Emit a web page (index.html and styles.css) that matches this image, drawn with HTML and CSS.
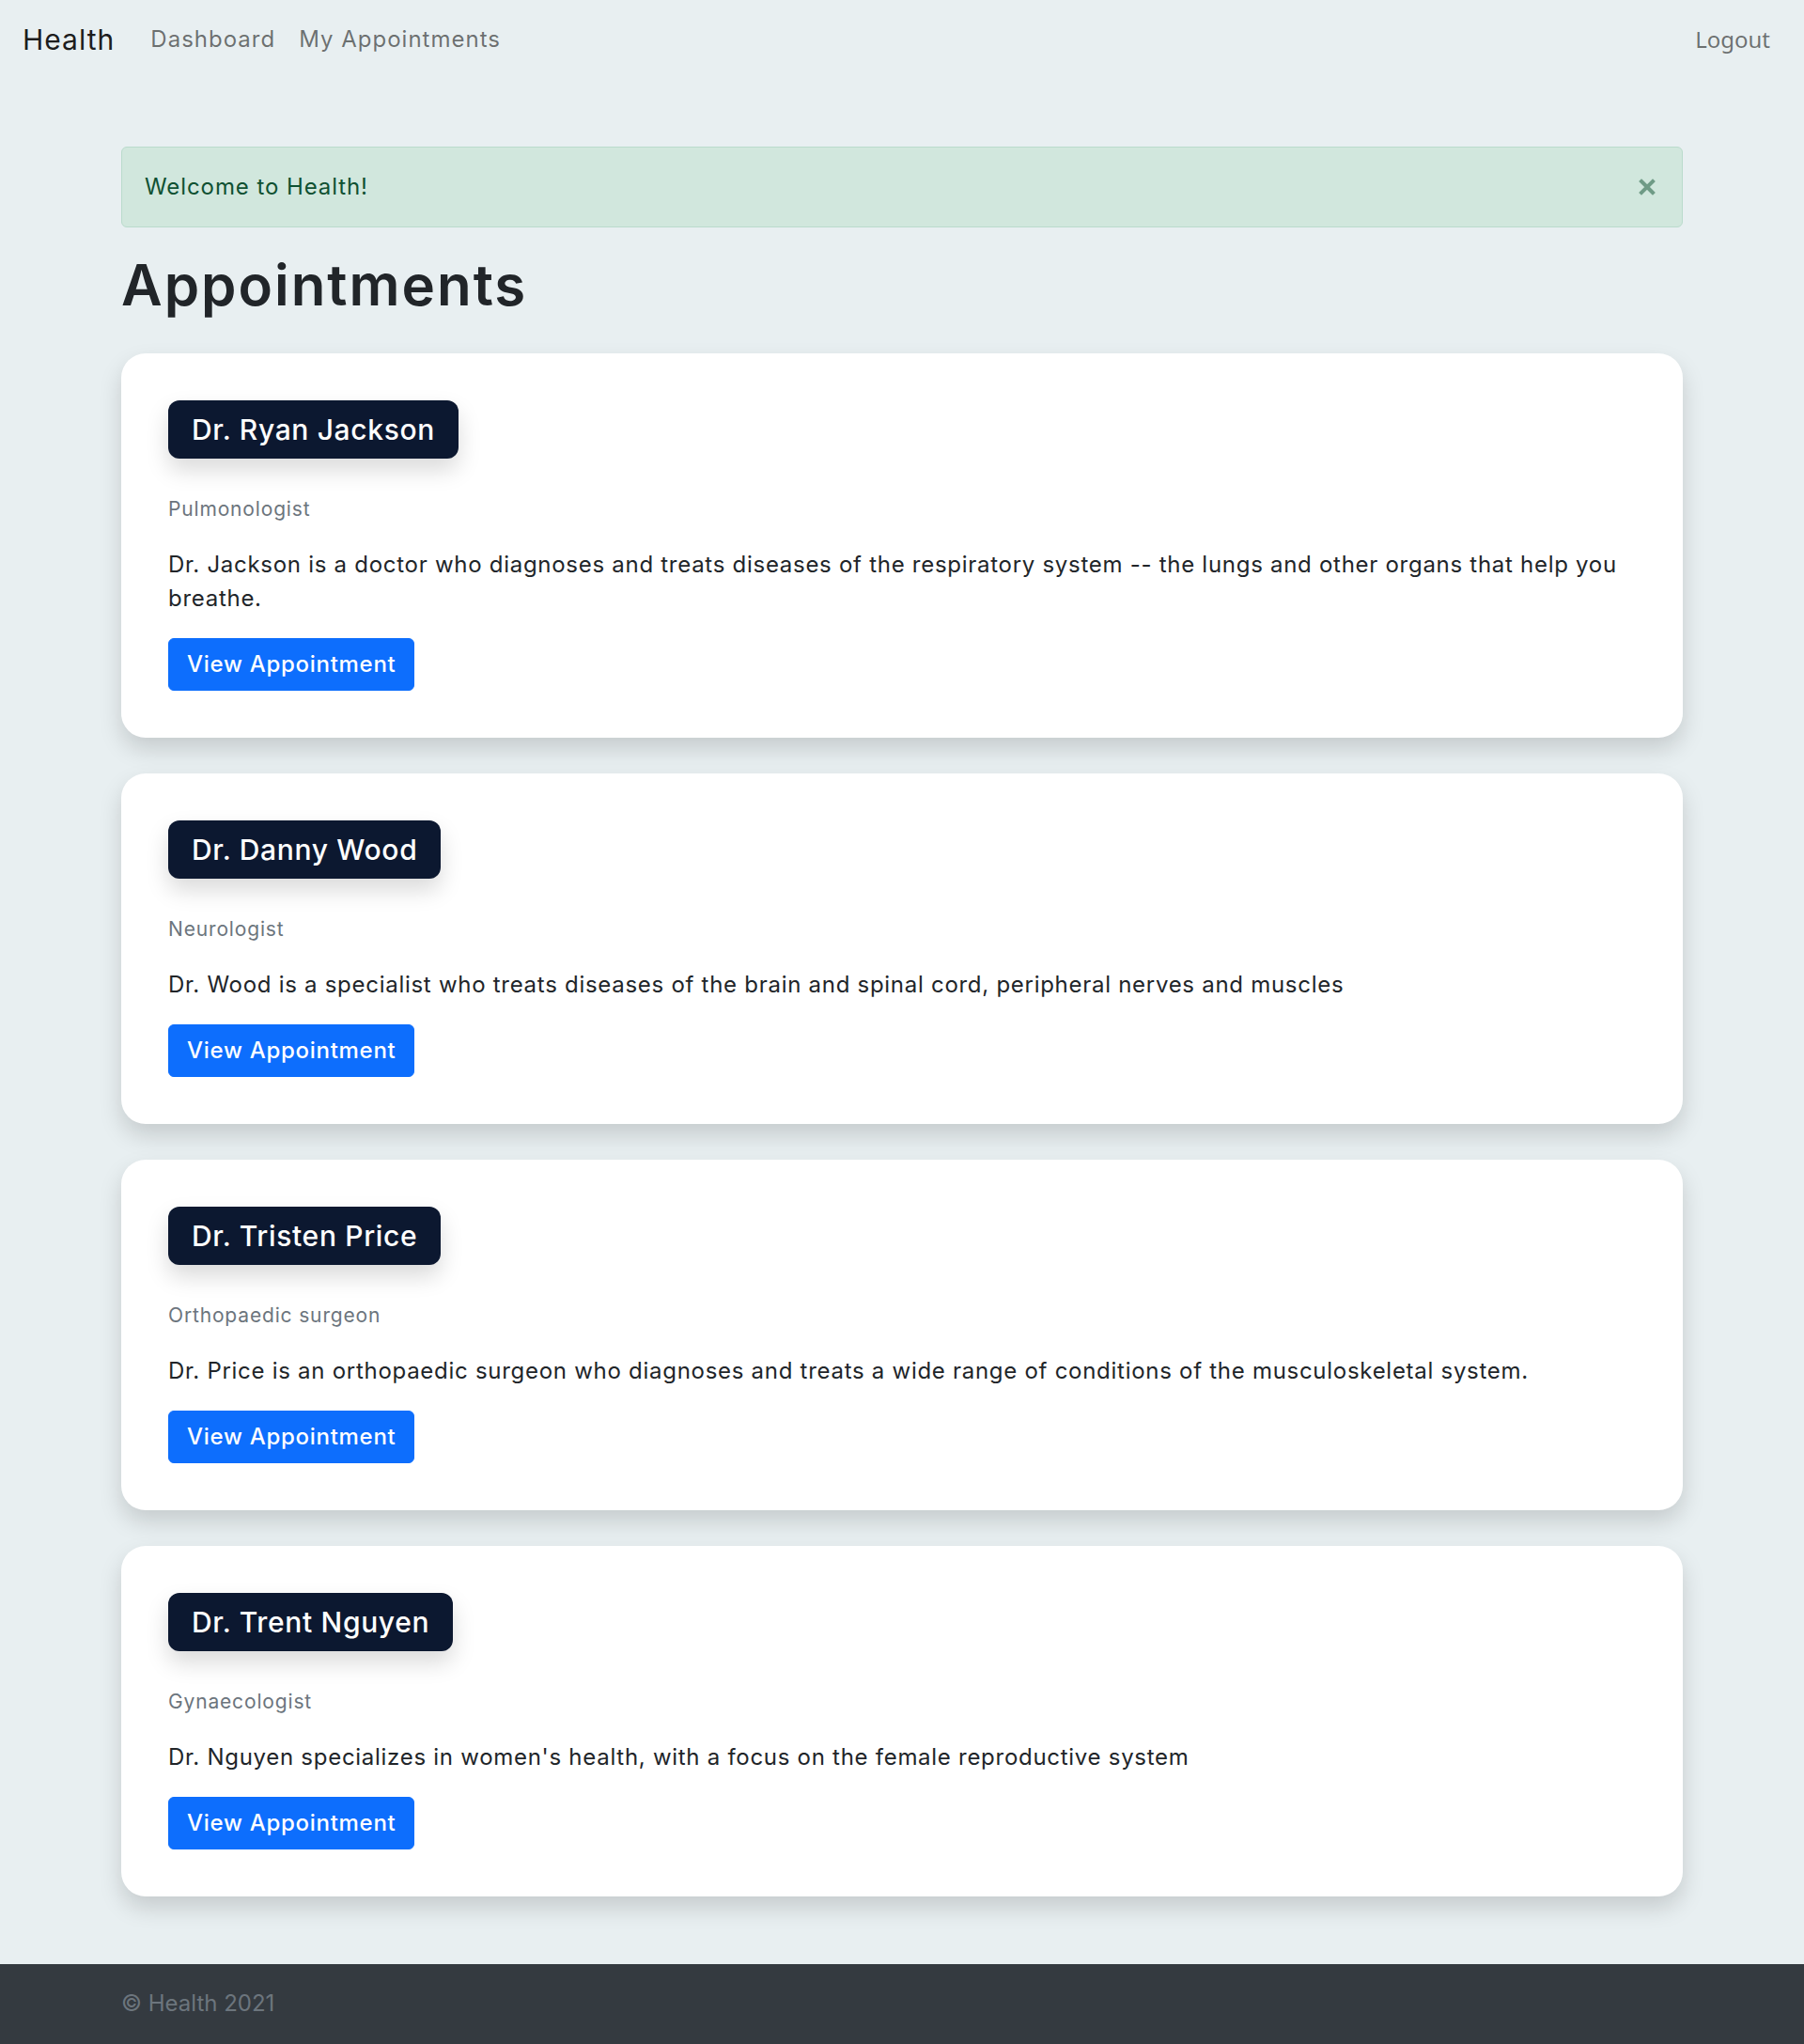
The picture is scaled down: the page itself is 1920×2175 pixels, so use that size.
FILE: index.html
```html
<!DOCTYPE html>
<html lang="en">
<head>
<meta charset="utf-8">
<title>Health - Appointments</title>
<link rel="stylesheet" href="styles.css">
</head>
<body>
<nav class="navbar">
  <div class="nav-left">
    <a class="brand" href="#">Health</a>
    <a class="nav-link" href="#">Dashboard</a>
    <a class="nav-link" href="#">My Appointments</a>
  </div>
  <a class="nav-link logout" href="#">Logout</a>
</nav>

<main class="container">
  <div class="alert">
    Welcome to Health!
    <button class="alert-close" type="button" aria-label="Close">
      <svg viewBox="0 0 18 18" width="18" height="18"><path d="M3 3 L15 15 M15 3 L3 15" stroke="#0f5132" stroke-width="4" stroke-linecap="square" fill="none"/></svg>
    </button>
  </div>

  <h1>Appointments</h1>

  <div class="card">
    <div class="name-badge">Dr. Ryan Jackson</div>
    <p class="specialty">Pulmonologist</p>
    <p class="desc">Dr. Jackson is a doctor who diagnoses and treats diseases of the respiratory system -- the lungs and other organs that help you breathe.</p>
    <a class="btn" href="#">View Appointment</a>
  </div>

  <div class="card">
    <div class="name-badge">Dr. Danny Wood</div>
    <p class="specialty">Neurologist</p>
    <p class="desc">Dr. Wood is a specialist who treats diseases of the brain and spinal cord, peripheral nerves and muscles</p>
    <a class="btn" href="#">View Appointment</a>
  </div>

  <div class="card">
    <div class="name-badge">Dr. Tristen Price</div>
    <p class="specialty">Orthopaedic surgeon</p>
    <p class="desc">Dr. Price is an orthopaedic surgeon who diagnoses and treats a wide range of conditions of the musculoskeletal system.</p>
    <a class="btn" href="#">View Appointment</a>
  </div>

  <div class="card">
    <div class="name-badge">Dr. Trent Nguyen</div>
    <p class="specialty">Gynaecologist</p>
    <p class="desc">Dr. Nguyen specializes in women's health, with a focus on the female reproductive system</p>
    <a class="btn" href="#">View Appointment</a>
  </div>
</main>

<footer class="footer">
  <div class="container">© Health 2021</div>
</footer>
</body>
</html>
```

FILE: styles.css
```css
* {
  box-sizing: border-box;
}

body {
  margin: 0;
  background: #e8eff1;
  font-family: Inter, "Noto Sans", sans-serif;
  font-size: 24px;
  line-height: 1.5;
  color: #212529;
  letter-spacing: 0.03em;
}

.navbar {
  height: 84px;
  display: flex;
  align-items: center;
  justify-content: space-between;
  padding: 0 36px 0 24px;
}

.nav-left {
  display: flex;
  align-items: center;
}

.brand {
  font-size: 30px;
  line-height: 45px;
  color: rgba(0, 0, 0, 0.9);
  text-decoration: none;
  margin-right: 38px;
  letter-spacing: 0.034em;
}

.nav-link {
  font-size: 24px;
  line-height: 36px;
  color: rgba(0, 0, 0, 0.55);
  text-decoration: none;
  margin-right: 25px;
  letter-spacing: 0.042em;
}

.logout {
  font-family: "Noto Sans", sans-serif;
  letter-spacing: 0;
  margin-right: 0;
}

.container {
  width: 1662px;
  margin: 0 auto;
}

main.container {
  padding: 72px 0 72px;
}

.alert {
  position: relative;
  height: 86px;
  background: #d1e7dd;
  border: 1px solid #badbcc;
  border-radius: 6px;
  color: #0f5132;
  padding: 24px 72px 24px 24px;
  margin-bottom: 25px;
  letter-spacing: 0.038em;
}

.alert-close {
  position: absolute;
  right: 28px;
  top: 33px;
  width: 18px;
  height: 18px;
  padding: 0;
  border: 0;
  background: none;
  opacity: 0.5;
  cursor: pointer;
}

.alert-close svg {
  display: block;
}

h1 {
  font-size: 60px;
  font-weight: 600;
  line-height: 72px;
  margin: 0 0 37px;
  letter-spacing: 0.033em;
}

.card {
  display: flex;
  flex-direction: column;
  align-items: flex-start;
  background: #fff;
  border-radius: 26px;
  box-shadow: 0 12px 24px rgba(0, 0, 0, 0.15);
  padding: 50px 50px 50px;
  margin-bottom: 38.5px;
}

.card:last-child {
  margin-bottom: 0;
}

.name-badge {
  background: #0c1830;
  color: #fff;
  font-size: 30px;
  font-weight: 500;
  line-height: 36px;
  padding: 13px 25px;
  border-radius: 12px;
  box-shadow: 0 12px 24px rgba(0, 0, 0, 0.15);
  margin-bottom: 38px;
  letter-spacing: 0.022em;
}

.specialty {
  font-size: 21px;
  line-height: 31.5px;
  color: #6c757d;
  margin: 0 0 25px;
  letter-spacing: 0.04em;
}

.desc {
  margin: 0 0 24px;
}

.btn {
  display: inline-block;
  background: #0d6efd;
  border: 1px solid #0d6efd;
  color: #fff;
  font-weight: 500;
  line-height: 36px;
  padding: 9px 19px;
  border-radius: 6px;
  text-decoration: none;
  letter-spacing: 0.03em;
}

.footer {
  background: #343a40;
  color: #6c757d;
  padding: 24px 0 25px;
  line-height: 36px;
  letter-spacing: 0;
}
```
